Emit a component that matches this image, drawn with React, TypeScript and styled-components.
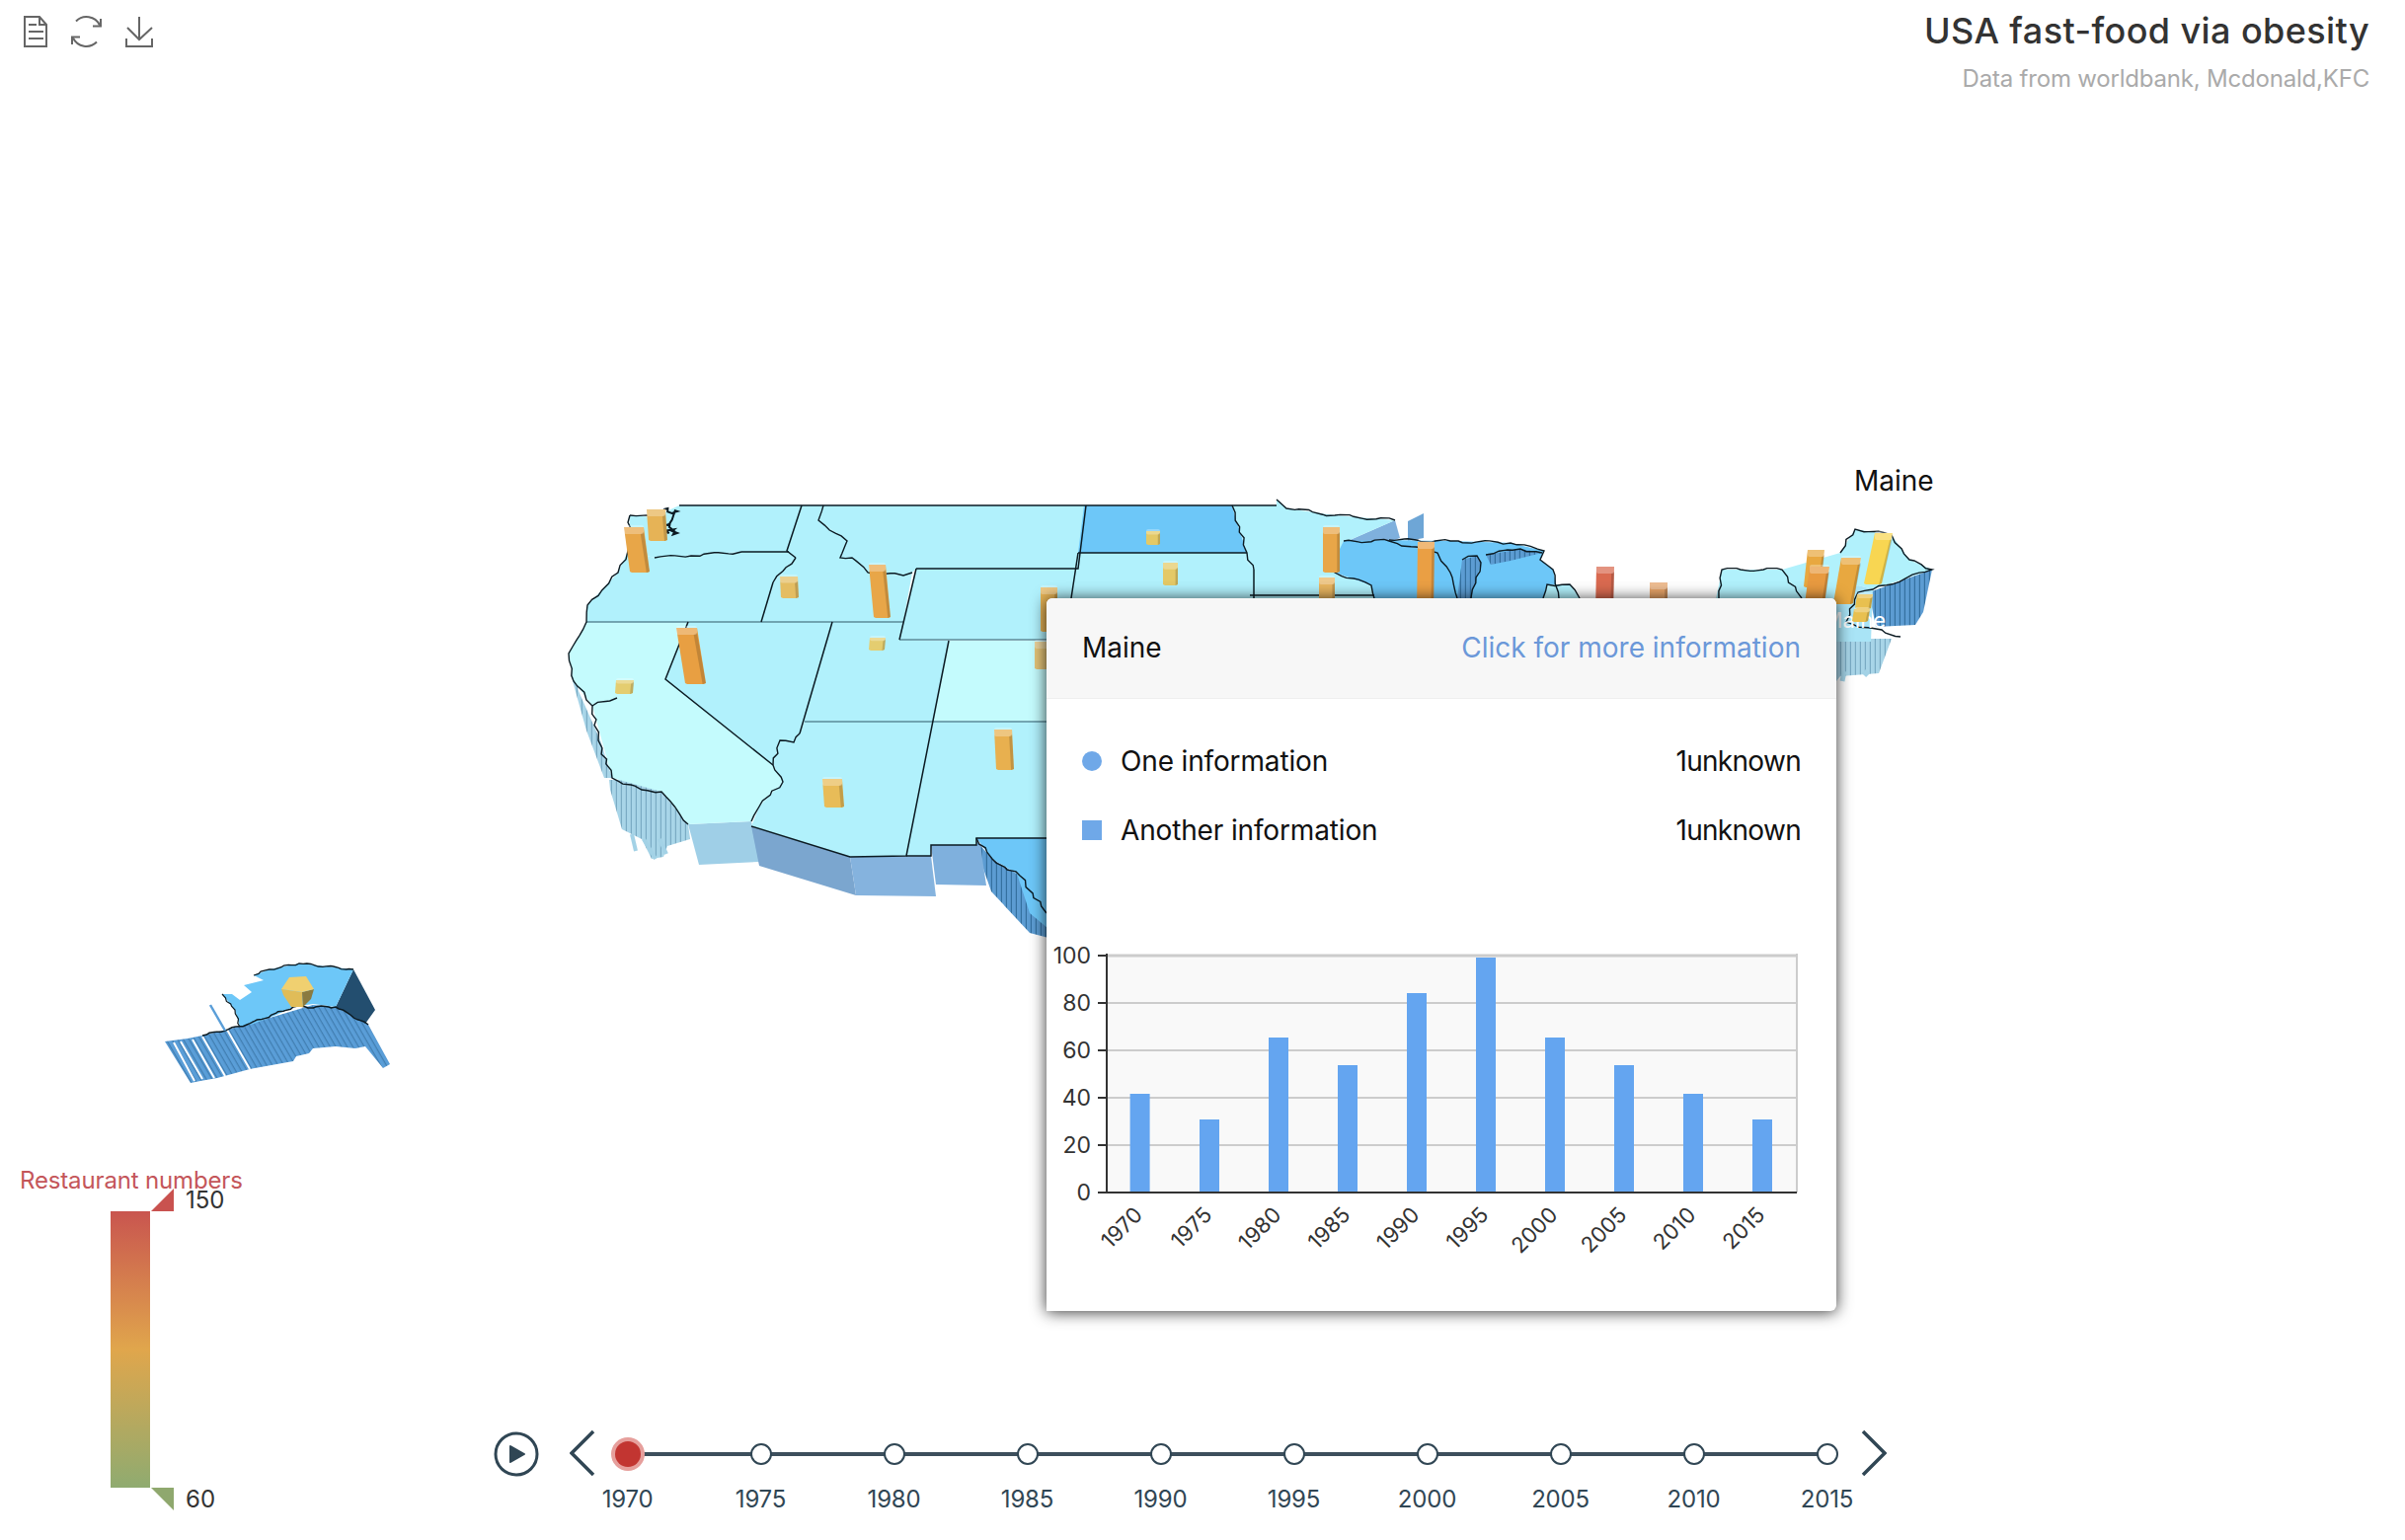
import { createGlobalStyle, styled } from "styled-components";

const GlobalStyle = createGlobalStyle`
  html, body {
    margin: 0;
    padding: 0;
    background: #fff;
    font-family: Inter, "Liberation Sans", Arial, sans-serif;
  }
`;

const Page = styled.div`
  position: relative;
  width: 2436px;
  height: 1560px;
  overflow: hidden;
  display: flex;
  flex-direction: column;
  justify-content: space-between;
`;

const MapCanvas = styled.svg`
  position: absolute;
  left: 0;
  top: 0;
`;

const TopBar = styled.header`
  position: relative;
  display: flex;
  justify-content: space-between;
  align-items: flex-start;
  padding: 16px 36px 0 24px;
`;

const Toolbox = styled.div`
  display: flex;
  gap: 23px;
`;

const TitleBlock = styled.div`
  text-align: right;
`;

const Title = styled.h1`
  margin: 0;
  font-size: 36px;
  line-height: 30px;
  font-weight: 500;
  letter-spacing: 0.4px;
  color: #333;
`;

const Subtitle = styled.div`
  margin-top: 20px;
  font-size: 24px;
  line-height: 28px;
  letter-spacing: -0.2px;
  color: #aaa;
`;

const HoverName = styled.div`
  position: absolute;
  left: 1878px;
  top: 470px;
  font-size: 28px;
  line-height: 34px;
  color: #111;
`;

const Tooltip = styled.aside`
  position: absolute;
  left: 1060px;
  top: 606px;
  width: 800px;
  height: 722px;
  background: #fff;
  border-radius: 6px 6px 6px 0;
  box-shadow: 0 1px 16px rgba(0, 0, 0, 0.8);
`;

const TooltipHead = styled.div`
  height: 99px;
  padding: 0 36px 2px;
  display: flex;
  justify-content: space-between;
  align-items: center;
  background: #f7f7f7;
  border-bottom: 1px solid #eee;
  border-radius: 6px 6px 0 0;
  font-size: 28px;
  color: #111;
`;

const MoreLink = styled.span`
  color: #6b98d9;
`;

const InfoList = styled.div`
  padding: 28px 36px 0;
`;

const InfoRow = styled.div`
  height: 70px;
  display: flex;
  align-items: center;
  font-size: 28px;
  letter-spacing: -0.15px;
  color: #111;
`;

const Marker = styled.i<{ $round?: boolean }>`
  width: 20px;
  height: 20px;
  margin-right: 19px;
  background: #6fa8e8;
  border-radius: ${(p) => (p.$round ? "50%" : "0")};
`;

const InfoValue = styled.span`
  margin-left: auto;
  letter-spacing: -0.7px;
`;

const Chart = styled.svg`
  display: block;
  margin-top: 73px;
`;

const BottomBar = styled.footer`
  position: relative;
  display: flex;
  align-items: flex-start;
  height: 380px;
`;

const Legend = styled.div`
  width: 500px;
  flex: none;
  padding-left: 20px;
  box-sizing: border-box;
`;

const LegendTitle = styled.div`
  font-size: 24px;
  line-height: 32px;
  letter-spacing: -0.15px;
  color: #c4565a;
`;

const LegendScale = styled.div`
  display: flex;
  height: 280px;
  margin: 15px 0 0 92px;
`;

const GradientBar = styled.div`
  width: 40px;
  margin-right: 1px;
  background: linear-gradient(#c9554f, #e0a64c 50%, #8fab70);
`;

const HandleColumn = styled.div`
  display: flex;
  flex-direction: column;
  justify-content: space-between;
  margin: -23px 0;
`;

const Handle = styled.div`
  display: flex;
  align-items: center;
  font-size: 24px;
  line-height: 23px;
  color: #333;
`;

const HandleMark = styled.i<{ $top?: boolean }>`
  width: 23px;
  height: 23px;
  margin-right: 12px;
  background: ${(p) => (p.$top ? "#c9524f" : "#8fa86e")};
  clip-path: ${(p) =>
    p.$top ? "polygon(100% 0, 100% 100%, 0 100%)" : "polygon(0 0, 100% 0, 100% 100%)"};
`;

const Timeline = styled.div`
  display: flex;
  align-items: flex-start;
  margin-top: 293px;
`;

const PlayIcon = styled.svg`
  display: block;
  flex: none;
  margin-top: -23px;
`;

const Chevron = styled.svg<{ $side: "left" | "right" }>`
  display: block;
  flex: none;
  margin-top: -26px;
  margin-left: ${(p) => (p.$side === "left" ? "31px" : "-33px")};
  margin-right: ${(p) => (p.$side === "left" ? "-35px" : "0")};
`;

const Stop = styled.div<{ $last?: boolean }>`
  position: relative;
  width: 135px;
  height: 80px;
  display: flex;
  flex-direction: column;
  align-items: center;
  font-size: 24px;
  letter-spacing: -0.2px;
  color: #304654;

  &::before {
    content: "";
    display: ${(p) => (p.$last ? "none" : "block")};
    position: absolute;
    left: 50%;
    top: -2px;
    width: 100%;
    height: 4px;
    background: #3d4f5c;
  }
`;

const Dot = styled.i<{ $active?: boolean }>`
  position: relative;
  box-sizing: border-box;
  width: ${(p) => (p.$active ? "26px" : "22px")};
  height: ${(p) => (p.$active ? "26px" : "22px")};
  margin-top: ${(p) => (p.$active ? "-13px" : "-11px")};
  margin-bottom: ${(p) => (p.$active ? "18px" : "20px")};
  border-radius: 50%;
  background: ${(p) => (p.$active ? "#c23531" : "#fff")};
  border: ${(p) => (p.$active ? "none" : "2.5px solid #304654")};
  box-shadow: ${(p) => (p.$active ? "0 0 0 4px #e69f9c" : "none")};
`;

const LIGHT = "#b1f1fc";
const PALE = "#c4fbfd";
const DEEP = "#6dc7f8";

const states: { fill: string; pts: number[][] }[] = [
  { fill: LIGHT, pts: [[638, 522], [662, 524], [688, 512], [812, 512], [797, 558], [806, 565], [799, 559], [751, 559], [663, 565], [636, 558]] },
  { fill: LIGHT, pts: [[636, 558], [663, 565], [751, 559], [799, 559], [806, 565], [783, 590], [771, 630], [594, 630], [595, 613], [626, 580]] },
  { fill: LIGHT, pts: [[812, 512], [834, 512], [829, 527], [858, 548], [851, 565], [863, 565], [879, 580], [915, 583], [924, 580], [915, 630], [771, 630], [783, 590], [806, 565], [797, 558]] },
  { fill: LIGHT, pts: [[834, 512], [1100, 512], [1092, 576], [928, 576], [924, 580], [915, 583], [879, 580], [863, 565], [851, 565], [858, 548], [829, 527]] },
  { fill: LIGHT, pts: [[928, 576], [1092, 576], [1085, 648], [911, 648]] },
  { fill: LIGHT, pts: [[697, 630], [843, 630], [810, 743], [804, 752], [790, 750], [783, 775], [674, 688]] },
  { fill: PALE, pts: [[595, 630], [580, 655], [576, 662], [581, 690], [600, 715], [620, 788], [670, 802], [697, 835], [761, 832], [769, 817], [793, 792], [783, 775], [674, 688], [697, 630]] },
  { fill: LIGHT, pts: [[843, 630], [915, 630], [911, 648], [961, 649], [945, 731], [815, 731], [810, 743]] },
  { fill: LIGHT, pts: [[815, 731], [945, 731], [918, 867], [861, 868], [761, 837], [769, 817], [793, 792], [783, 775], [790, 750], [804, 752], [810, 743]] },
  { fill: PALE, pts: [[961, 649], [1085, 649], [1085, 731], [945, 731]] },
  { fill: LIGHT, pts: [[945, 731], [1085, 731], [1085, 849], [989, 849], [989, 856], [943, 856], [943, 867], [918, 867]] },
  { fill: DEEP, pts: [[989, 849], [1085, 849], [1085, 960], [1043, 925], [1030, 885], [1005, 870]] },
  { fill: DEEP, pts: [[1098, 512], [1248, 512], [1251, 523], [1263, 560], [1092, 560]] },
  { fill: LIGHT, pts: [[1092, 560], [1263, 560], [1260, 566], [1270, 577], [1270, 606], [1085, 606]] },
  { fill: LIGHT, pts: [[1248, 512], [1293, 512], [1293, 506], [1303, 515], [1352, 522], [1413, 527], [1365, 548], [1355, 560], [1352, 580], [1389, 593], [1392, 606], [1270, 606], [1270, 577], [1260, 566], [1263, 560], [1251, 523]] },
  { fill: DEEP, pts: [[1361, 548], [1407, 547], [1469, 548], [1530, 550], [1564, 558], [1560, 567], [1573, 577], [1579, 606], [1392, 606], [1389, 593], [1352, 580], [1355, 560]] },
  { fill: LIGHT, pts: [[1563, 606], [1567, 592], [1590, 592], [1600, 606]] },
  { fill: LIGHT, pts: [[1741, 593], [1744, 577], [1805, 577], [1825, 606], [1738, 606]] },
  { fill: LIGHT, pts: [[1805, 577], [1864, 560], [1879, 536], [1916, 542], [1934, 567], [1957, 577], [1897, 597], [1882, 593], [1860, 607], [1825, 606]] },
  { fill: "#a9e4f6", pts: [[1825, 606], [1860, 607], [1882, 593], [1897, 597], [1895, 650], [1825, 650]] },
];

const plainWalls: { fill: string; pts: number[][] }[] = [
  { fill: "#9fcfe7", pts: [[697, 835], [761, 832], [769, 873], [708, 876]] },
  { fill: "#7ba6cf", pts: [[761, 837], [861, 868], [867, 907], [769, 877]] },
  { fill: "#85b3de", pts: [[861, 868], [943, 867], [948, 908], [867, 907]] },
  { fill: "#7fb0dd", pts: [[943, 856], [993, 856], [999, 897], [948, 896]] },
  { fill: "#7fb0dd", pts: [[1365, 548], [1413, 527], [1418, 545], [1410, 548]] },
  { fill: "#6ea6d6", pts: [[1426, 528], [1442, 520], [1442, 545], [1426, 548]] },
];

const stripedWalls: { fill: string; pts: number[][] }[] = [
  { fill: "url(#stripeLight)", pts: [[617, 790], [650, 790], [670, 802], [697, 835], [699, 850], [676, 857], [672, 868], [660, 870], [650, 850], [630, 840], [618, 800]] },
  { fill: "url(#stripeLight)", pts: [[578, 665], [586, 700], [608, 750], [620, 788], [612, 788], [594, 740], [580, 690]] },
  { fill: "url(#stripeDeep)", pts: [[989, 852], [1005, 870], [1033, 887], [1060, 925], [1062, 950], [1043, 945], [1004, 903], [996, 880]] },
  { fill: "url(#stripeDeep)", pts: [[1957, 577], [1948, 620], [1940, 633], [1900, 635], [1893, 600]] },
  { fill: "url(#stripeLight)", pts: [[1860, 647], [1916, 647], [1903, 682], [1864, 685], [1860, 690]] },
];

// strips of lake that show through the land, drawn over the state fills
const lakeSlots: number[][][] = [
  [[1481, 567], [1496, 563], [1500, 570], [1490, 606], [1476, 606]],
  [[1505, 562], [1540, 556], [1562, 560], [1530, 568], [1510, 572]],
];

const borders: number[][][] = [
  [[688, 512], [1293, 512]],
  [[812, 512], [797, 558], [806, 565]],
  [[799, 559], [751, 559]],
  [[771, 630], [783, 590]],
  [[697, 630], [674, 688], [783, 775]],
  [[843, 630], [810, 743]],
  [[928, 576], [1092, 576], [1100, 512]],
  [[928, 576], [911, 648]],
  [[961, 649], [918, 867], [861, 868], [761, 837]],
  [[1092, 560], [1263, 560]],
  [[1092, 560], [1085, 606]],
  [[1270, 577], [1270, 606]],
  [[1266, 603], [1392, 603]],
  [[918, 867], [943, 867], [943, 856], [989, 856], [989, 849], [1060, 849]],
];

const softBorders: number[][][] = [
  [[594, 630], [843, 630], [915, 630]],
  [[815, 731], [1060, 731]],
  [[911, 648], [1085, 648]],
];

const coasts: number[][][] = [
  [[638, 522], [662, 524]],
  [[638, 522], [636, 558], [626, 580], [595, 613], [594, 630], [580, 655], [576, 662], [581, 690], [600, 715], [606, 750], [620, 788], [650, 800], [670, 802], [697, 835]],
  [[663, 565], [700, 563], [751, 559]],
  [[806, 565], [783, 590]],
  [[834, 512], [829, 527], [858, 548], [851, 565], [863, 565], [879, 580], [915, 583], [924, 580]],
  [[600, 715], [625, 707]],
  [[810, 743], [804, 752], [790, 750], [783, 775], [793, 792], [769, 817], [761, 832]],
  [[989, 849], [1005, 870], [1033, 887], [1060, 925]],
  [[1248, 512], [1263, 560], [1270, 577]],
  [[1293, 506], [1303, 515], [1352, 522], [1413, 527]],
  [[1355, 560], [1352, 580], [1389, 593], [1392, 606]],
  [[1361, 548], [1407, 548], [1456, 560], [1469, 580], [1476, 606]],
  [[1407, 547], [1469, 548], [1530, 550], [1564, 558], [1560, 567], [1573, 577], [1579, 606]],
  [[1481, 567], [1496, 563], [1500, 570], [1490, 606]],
  [[1505, 562], [1540, 556], [1562, 560]],
  [[1563, 606], [1567, 592], [1590, 592], [1600, 606]],
  [[1741, 606], [1744, 577], [1805, 577], [1825, 606]],
  [[1864, 560], [1879, 536], [1916, 542], [1934, 567], [1957, 577], [1897, 597], [1882, 600], [1870, 630], [1925, 645]],
];

const drips = [
  [640, 845, 644, 862, 4],
  [652, 850, 664, 870, 4],
  [668, 850, 675, 865, 4],
  [1868, 680, 1866, 690, 5],
  [1892, 680, 1888, 684, 6],
];

const alaskaSlits = [
  [176, 1056, 197, 1095],
  [183, 1055, 205, 1093],
  [195, 1053, 217, 1092],
  [205, 1050, 228, 1090],
  [230, 1043, 253, 1083],
];

type Column = { x0: number; x1: number; y0: number; y1: number; color: string; lean: number };

const columns: Column[] = [
  { x0: 632, x1: 658, y0: 532, y1: 580, color: "#e8a648", lean: -6 },
  { x0: 655, x1: 676, y0: 514, y1: 548, color: "#e6b356", lean: -2 },
  { x0: 790, x1: 809, y0: 582, y1: 606, color: "#e4bd62", lean: -1 },
  { x0: 880, x1: 902, y0: 570, y1: 626, color: "#e8a648", lean: -5 },
  { x0: 880, x1: 897, y0: 644, y1: 659, color: "#e4cd70", lean: 1 },
  { x0: 685, x1: 715, y0: 634, y1: 693, color: "#e89f42", lean: -9 },
  { x0: 623, x1: 642, y0: 687, y1: 703, color: "#e4cd70", lean: 1 },
  { x0: 833, x1: 855, y0: 787, y1: 818, color: "#e8bc58", lean: -2 },
  { x0: 1007, x1: 1027, y0: 737, y1: 780, color: "#e8b04f", lean: -2 },
  { x0: 1054, x1: 1071, y0: 593, y1: 640, color: "#e6b356", lean: 0 },
  { x0: 1048, x1: 1062, y0: 648, y1: 678, color: "#e4c478", lean: 0 },
  { x0: 1161, x1: 1175, y0: 536, y1: 552, color: "#e4c966", lean: 0 },
  { x0: 1178, x1: 1193, y0: 568, y1: 593, color: "#e4c966", lean: 0 },
  { x0: 1340, x1: 1357, y0: 532, y1: 580, color: "#e8a648", lean: 0 },
  { x0: 1336, x1: 1352, y0: 583, y1: 620, color: "#e8b560", lean: 0 },
  { x0: 1435, x1: 1453, y0: 547, y1: 620, color: "#ea9f44", lean: 1 },
  { x0: 1616, x1: 1635, y0: 572, y1: 620, color: "#d96a50", lean: 1 },
  { x0: 1671, x1: 1689, y0: 588, y1: 620, color: "#e8a468", lean: 0 },
  { x0: 1827, x1: 1848, y0: 555, y1: 595, color: "#e8a840", lean: 4 },
  { x0: 1827, x1: 1853, y0: 572, y1: 620, color: "#e89a40", lean: 6 },
  { x0: 1857, x1: 1885, y0: 563, y1: 612, color: "#e8a840", lean: 8 },
  { x0: 1879, x1: 1897, y0: 600, y1: 617, color: "#e8c050", lean: 2 },
  { x0: 1876, x1: 1894, y0: 615, y1: 630, color: "#e8c050", lean: 2 },
  { x0: 1888, x1: 1917, y0: 538, y1: 592, color: "#f8d652", lean: 11 },
];

const bars = [
  { year: "1970", x: 1154.6, top: 1109 },
  { year: "1975", x: 1225, top: 1135 },
  { year: "1980", x: 1295, top: 1052 },
  { year: "1985", x: 1365, top: 1080 },
  { year: "1990", x: 1435, top: 1007 },
  { year: "1995", x: 1505, top: 971 },
  { year: "2000", x: 1575, top: 1052 },
  { year: "2005", x: 1645, top: 1080 },
  { year: "2010", x: 1715, top: 1109 },
  { year: "2015", x: 1785, top: 1135 },
];

const ticks = [
  { label: "100", y: 968 },
  { label: "80", y: 1016 },
  { label: "60", y: 1064 },
  { label: "40", y: 1112 },
  { label: "20", y: 1160 },
  { label: "0", y: 1208 },
];

const years = ["1970", "1975", "1980", "1985", "1990", "1995", "2000", "2005", "2010", "2015"];

const toPoints = (pts: number[][]) => pts.map((p) => p.join(",")).join(" ");

// rough coastline: subdivide each segment and push the points about
function jagged(pts: number[][], amp = 1.6, step = 7) {
  const out: number[][] = [];
  let seed = pts[0][0] * 0.37 + pts[0][1] * 0.11;
  for (let i = 0; i < pts.length - 1; i++) {
    const [ax, ay] = pts[i];
    const [bx, by] = pts[i + 1];
    const n = Math.max(1, Math.round(Math.hypot(bx - ax, by - ay) / step));
    for (let j = 0; j < n; j++) {
      seed += 1.7;
      const dx = j === 0 ? 0 : Math.sin(seed * 12.9898) * amp;
      const dy = j === 0 ? 0 : Math.sin(seed * 78.233) * amp;
      out.push([ax + ((bx - ax) * j) / n + dx, ay + ((by - ay) * j) / n + dy]);
    }
  }
  out.push(pts[pts.length - 1]);
  return toPoints(out.map((p) => [+p[0].toFixed(1), +p[1].toFixed(1)]));
}

function Block({ x0, x1, y0, y1, color, lean }: Column) {
  const w = x1 - x0 - Math.abs(lean);
  const tl = lean > 0 ? x0 + lean : x0;
  const bl = lean > 0 ? x0 : x0 - lean;
  const cap = Math.min(9, (y1 - y0) * 0.35);
  return (
    <g>
      <polygon points={toPoints([[tl, y0 + 2], [tl + w, y0 + 2], [bl + w, y1 - 1], [bl + w - 2, y1], [bl + 2, y1], [bl, y1 - 1]])} fill={color} />
      <polygon
        points={toPoints([[tl + w * 0.84, y0 + cap], [tl + w, y0 + cap - 2], [bl + w, y1 - 1], [bl + w * 0.84, y1]])}
        fill="#000"
        opacity={0.16}
      />
      <rect x={tl} y={y0} width={w} height={cap} rx={2} fill="#fff" opacity={0.28} />
    </g>
  );
}

function UsaMap() {
  return (
    <MapCanvas width={2436} height={1560} viewBox="0 0 2436 1560">
      <defs>
        <pattern id="stripeDeep" width="5" height="9" patternUnits="userSpaceOnUse">
          <rect width="5" height="9" fill="#5c9cd2" />
          <rect x="3.8" width="1.2" height="9" fill="#34709f" />
        </pattern>
        <pattern id="stripeLight" width="5" height="9" patternUnits="userSpaceOnUse">
          <rect width="5" height="9" fill="#a8d5e8" />
          <rect x="3.8" width="1.2" height="9" fill="#7aabc4" />
        </pattern>
        <pattern id="stripeAlaska" width="5" height="5" patternUnits="userSpaceOnUse" patternTransform="rotate(-30)">
          <rect width="5" height="5" fill="#5a9ed8" />
          <rect x="3.8" width="1" height="5" fill="#3a76a8" />
        </pattern>
      </defs>

      {stripedWalls.map((w, i) => (
        <polygon key={i} points={toPoints(w.pts)} fill={w.fill} />
      ))}
      {drips.map(([x1, y1, x2, y2, sw], i) => (
        <line key={i} x1={x1} y1={y1} x2={x2} y2={y2} stroke="#a3d2e6" strokeWidth={sw} />
      ))}
      {plainWalls.map((w, i) => (
        <polygon key={i} points={toPoints(w.pts)} fill={w.fill} />
      ))}
      {states.map((s, i) => (
        <polygon key={i} points={toPoints(s.pts)} fill={s.fill} />
      ))}
      {lakeSlots.map((s, i) => (
        <polygon key={i} points={toPoints(s)} fill="url(#stripeDeep)" />
      ))}
      {softBorders.map((b, i) => (
        <polyline key={i} points={toPoints(b)} fill="none" stroke="#5b8a99" strokeWidth={1.6} />
      ))}
      {borders.map((b, i) => (
        <polyline key={i} points={toPoints(b)} fill="none" stroke="#0b1a22" strokeWidth={1.5} />
      ))}
      {coasts.map((c, i) => (
        <polyline key={i} points={jagged(c)} fill="none" stroke="#0b1a22" strokeWidth={1.4} />
      ))}
      <polyline points={jagged([[672, 516], [686, 518], [675, 532], [686, 540], [672, 538]], 3, 3)} fill="none" stroke="#0b1a22" strokeWidth={2} />

      <text x={1910} y={636} textAnchor="end" fontSize={22} fill="#fff" fontFamily="Inter, sans-serif">
        Maine
      </text>

      {columns.map((c, i) => (
        <Block key={i} {...c} />
      ))}

      {/* alaska */}
      <polygon
        points="167,1055 190,1052 205,1049 250,1038 317,1018 340,1020 373,1038 395,1078 388,1082 370,1060 360,1062 340,1060 317,1062 313,1067 300,1070 297,1075 253,1083 220,1092 203,1095 193,1097"
        fill="url(#stripeAlaska)"
      />
      {alaskaSlits.map(([x1, y1, x2, y2], i) => (
        <line key={i} x1={x1} y1={y1} x2={x2} y2={y2} stroke="#fff" strokeWidth={2} />
      ))}
      <polygon points="358,982 380,1023 370,1037 340,1020" fill="#234e6f" />
      <polygon
        points="257,988 273,982 303,976 358,982 340,1020 317,1017 297,1020 280,1028 257,1037 243,1040 238,1023 225,1007 235,1007 243,1013 255,1005 247,998 267,993"
        fill={DEEP}
      />
      <polyline points={jagged([[257, 988], [273, 982], [303, 976], [358, 982]], 1, 4)} fill="none" stroke="#0b1a22" strokeWidth={1.3} />
      <polyline points={jagged([[205, 1049], [250, 1038], [297, 1020], [340, 1020], [373, 1038]], 1, 4)} fill="none" stroke="#0b1a22" strokeWidth={1.5} />
      <polyline points={jagged([[225, 1007], [238, 1023], [243, 1040]], 1, 4)} fill="none" stroke="#0b1a22" strokeWidth={1.2} />
      <line x1="213" y1="1018" x2="228" y2="1044" stroke="#5a9ed8" strokeWidth={2.5} />
      <polygon points="285,1002 306,1005 307,1020 295,1020 287,1008" fill="#e0bc58" />
      <polygon points="306,1005 318,1002 315,1012 307,1020" fill="#8a7a40" />
      <polygon points="293,990 310,989 318,1002 306,1005 285,1002" fill="#f0d070" />
    </MapCanvas>
  );
}

function BarChart() {
  return (
    <Chart width={800} height={378} viewBox="1060 950 800 378" fontFamily="Inter, sans-serif">
      <rect x={1121} y={968} width={699} height={241} fill="#f9f9f9" />
      <line x1={1820} y1={967} x2={1820} y2={1209} stroke="#ccc" strokeWidth={2} />
      {ticks.slice(0, 5).map((t) => (
        <line key={t.y} x1={1121} y1={t.y + 1} x2={1820} y2={t.y + 1} stroke="#ccc" strokeWidth={t.label === "100" ? 3 : 2} />
      ))}
      {bars.map((b) => (
        <rect key={b.year} x={b.x - 10} y={b.top} width={20} height={1208 - b.top} fill="#64a5f0" />
      ))}
      <line x1={1121} y1={967} x2={1121} y2={1210} stroke="#333" strokeWidth={2} />
      <line x1={1112} y1={1209} x2={1820} y2={1209} stroke="#333" strokeWidth={2} />
      {ticks.map((t) => (
        <g key={t.label}>
          <line x1={1112} y1={t.y + 1} x2={1121} y2={t.y + 1} stroke="#333" strokeWidth={2} />
          <text x={1105} y={t.y + 9} textAnchor="end" fontSize={23} fill="#333">
            {t.label}
          </text>
        </g>
      ))}
      {bars.map((b) => (
        <text
          key={b.year}
          x={b.x + 4}
          y={1233}
          textAnchor="end"
          fontSize={22}
          fill="#333"
          transform={`rotate(-45 ${b.x + 4} 1233)`}
        >
          {b.year}
        </text>
      ))}
    </Chart>
  );
}

export default function App() {
  return (
    <Page>
      <GlobalStyle />
      <UsaMap />

      <TopBar>
        <Toolbox>
          <svg width="24" height="32" viewBox="0 0 24 32" fill="none" stroke="#666" strokeWidth="2">
            <path d="M1 1h15l7 8v22H1zM16 1v8h7M5 9h8M5 16h15M5 23h15" />
          </svg>
          <svg width="33" height="32" viewBox="0 0 33 32" fill="none" stroke="#666" strokeWidth="2">
            <path d="M30 9.500A15 15 0 0 0 6 5.500M3 22.500A15 15 0 0 0 27 26.500" />
            <path d="M31 3v7.500h-8M2 29v-7.500h8" />
          </svg>
          <svg width="28" height="32" viewBox="0 0 28 32" fill="none" stroke="#666" strokeWidth="2">
            <path d="M14 1v23M2 12l12 12 13-12M1 23v8h26v-8" />
          </svg>
        </Toolbox>
        <TitleBlock>
          <Title>USA fast-food via obesity</Title>
          <Subtitle>Data from worldbank, Mcdonald,KFC</Subtitle>
        </TitleBlock>
      </TopBar>

      <HoverName>Maine</HoverName>

      <Tooltip>
        <TooltipHead>
          <span>Maine</span>
          <MoreLink>Click for more information</MoreLink>
        </TooltipHead>
        <InfoList>
          <InfoRow>
            <Marker $round />
            One information
            <InfoValue>1unknown</InfoValue>
          </InfoRow>
          <InfoRow>
            <Marker />
            Another information
            <InfoValue>1unknown</InfoValue>
          </InfoRow>
        </InfoList>
        <BarChart />
      </Tooltip>

      <BottomBar>
        <Legend>
          <LegendTitle>Restaurant numbers</LegendTitle>
          <LegendScale>
            <GradientBar />
            <HandleColumn>
              <Handle>
                <HandleMark $top />
                150
              </Handle>
              <Handle>
                <HandleMark />
                60
              </Handle>
            </HandleColumn>
          </LegendScale>
        </Legend>
        <Timeline>
          <PlayIcon width="46" height="46" viewBox="0 0 46 46">
            <circle cx="23" cy="23" r="21" fill="none" stroke="#304654" strokeWidth="3" />
            <path d="M17 15l14 8-14 8z" fill="#304654" stroke="#304654" strokeWidth="2" strokeLinejoin="round" />
          </PlayIcon>
          <Chevron $side="left" width="26" height="50" viewBox="0 0 26 50">
            <path d="M24 3L2 25l22 22" fill="none" stroke="#304654" strokeWidth="3.500" />
          </Chevron>
          {years.map((y, i) => (
            <Stop key={y} $last={i === years.length - 1}>
              <Dot $active={i === 0} />
              {y}
            </Stop>
          ))}
          <Chevron $side="right" width="26" height="50" viewBox="0 0 26 50">
            <path d="M2 3l22 22L2 47" fill="none" stroke="#304654" strokeWidth="3.500" />
          </Chevron>
        </Timeline>
      </BottomBar>
    </Page>
  );
}
